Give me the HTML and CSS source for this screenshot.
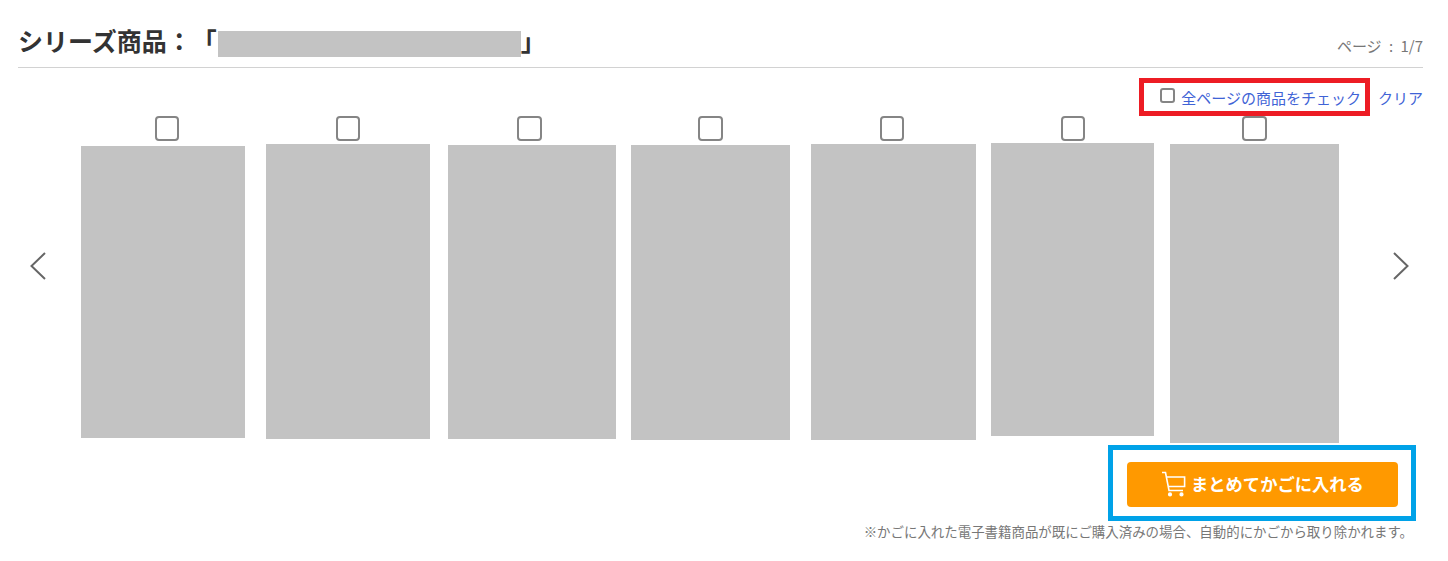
FILE: index.html
```html
<!DOCTYPE html>
<html lang="ja">
<head>
<meta charset="utf-8">
<title>シリーズ商品</title>
<link rel="stylesheet" href="styles.css">
</head>
<body>
<main class="page">
  <header class="head">
    <h2 class="title">シリーズ商品：「<span class="mask"></span>」</h2>
    <span class="pageno">ページ : 1/7</span>
  </header>
  <div class="tools">
    <label class="checkall"><input type="checkbox" class="small-check"><a href="#">全ページの商品をチェック</a></label>
    <a href="#" class="clear">クリア</a>
  </div>
  <span class="mark mark-red"></span>
  <section class="carousel">
    <button class="nav" aria-label="前へ">
      <svg width="18" height="30" viewBox="0 0 18 30"><path d="M16 2 L2.5 15 L16 28" fill="none" stroke="#666" stroke-width="2"/></svg>
    </button>
    <div class="items">
      <div class="item"><input type="checkbox" class="check"><div class="cover" style="width:164px;height:292px;margin-left:6px;margin-top:5px"></div></div>
      <div class="item"><input type="checkbox" class="check"><div class="cover" style="width:164px;height:295px;margin-left:9.7px;margin-top:3px"></div></div>
      <div class="item"><input type="checkbox" class="check"><div class="cover" style="width:168px;height:294px;margin-left:10.4px;margin-top:4px"></div></div>
      <div class="item"><input type="checkbox" class="check"><div class="cover" style="width:159px;height:295px;margin-left:12.1px;margin-top:4px"></div></div>
      <div class="item"><input type="checkbox" class="check"><div class="cover" style="width:165px;height:296px;margin-left:10.9px;margin-top:3px"></div></div>
      <div class="item"><input type="checkbox" class="check"><div class="cover" style="width:163px;height:293px;margin-left:9.6px;margin-top:2px"></div></div>
      <div class="item"><input type="checkbox" class="check"><div class="cover" style="width:169px;height:299px;margin-left:7.3px;margin-top:3px"></div></div>
    </div>
    <button class="nav" aria-label="次へ">
      <svg width="18" height="30" viewBox="0 0 18 30"><path d="M2 2 L15.5 15 L2 28" fill="none" stroke="#666" stroke-width="2"/></svg>
    </button>
  </section>
  <div class="actions">
    <button class="cart">
      <svg width="25" height="26" viewBox="0 0 25 26" fill="none" stroke="#fff" stroke-width="1.6"><path d="M1 1.5 H4.5 L8 19.5 H22"/><path d="M5.4 6 H23.6 V15.5 H7.2"/><circle cx="9" cy="23.4" r="1.3" fill="#fff"/><circle cx="20.5" cy="23.4" r="1.3" fill="#fff"/></svg>
      <span>まとめてかごに入れる</span>
    </button>
  </div>
  <span class="mark mark-blue"></span>
  <p class="note">※かごに入れた電子書籍商品が既にご購入済みの場合、自動的にかごから取り除かれます。</p>
</main>
</body>
</html>
```
FILE: styles.css
```css
* { box-sizing: border-box; }
html, body { margin: 0; padding: 0; background: #fff; }
body {
  font-family: "Noto Sans CJK JP", "Noto Sans", sans-serif;
  color: #333;
  height: 561px;
  overflow: hidden;
  text-spacing-trim: space-all;
}
a { color: #3f63d6; text-decoration: none; }
.page { position: relative; padding: 0 25px 0 18px; }
.head {
  height: 68px;
  padding-top: 31px;
  border-bottom: 1px solid #d2d2d2;
  display: flex;
  justify-content: space-between;
}
.title {
  margin: 0;
  height: 26px;
  font-size: 25px;
  line-height: 18px;
  font-weight: 700;
  color: #333;
  display: flex;
  align-items: flex-start;
  white-space: nowrap;
}
.mask { display: block; width: 303px; height: 26px; margin-left: 1px; background: #c3c3c3; }
.pageno { font-size: 15px; line-height: 20px; color: #777; margin-top: 5px; word-spacing: 4px; }
.tools {
  height: 48px;
  padding-top: 19px;
  display: flex;
  justify-content: flex-end;
  align-items: flex-start;
  font-size: 15px;
  line-height: 22px;
}
.checkall { display: flex; align-items: flex-start; }
.small-check {
  appearance: none;
  width: 15px; height: 15px;
  margin: 1px 6px 0 0;
  border: 2px solid #858585;
  border-radius: 3px;
  background: #fff;
}
.clear { margin-left: 17px; }
.mark { position: absolute; display: block; pointer-events: none; border-style: solid; }
.mark-red { left: 1139px; top: 78px; width: 231px; height: 38px; border-width: 5px; border-color: #ed1c24; }
.mark-blue { left: 1108px; top: 445px; width: 308px; height: 76px; border-width: 5px; border-color: #00a2e8; }
.carousel { display: flex; align-items: flex-start; height: 327px; }
.nav {
  flex: none;
  width: 57px;
  height: 327px;
  padding: 0 0 0 11px;
  border: 0;
  background: none;
  display: flex;
  align-items: flex-start;
}
.nav svg { margin-top: 135px; display: block; }
.nav:last-child { width: 96px; padding: 0 0 0 48px; }
.items { flex: none; width: 1269px; display: grid; grid-template-columns: repeat(7, 1fr); }
.item { display: flex; flex-direction: column; align-items: flex-start; min-width: 0; }
.check {
  appearance: none;
  width: 24.5px; height: 25px;
  margin: 0 0 0 79.5px;
  border: 2px solid #858585;
  border-radius: 4px;
  background: #fff;
  flex: none;
}
.cover { background: #c3c3c3; flex: none; }
.actions { display: flex; justify-content: flex-end; height: 78px; padding-top: 19px; }
.cart {
  width: 271px;
  height: 45px;
  margin-right: 25px;
  border: 0;
  border-radius: 4px;
  background: #ff9900;
  color: #fff;
  font-family: inherit;
  font-size: 17.3px;
  font-weight: 700;
  display: flex;
  align-items: center;
  padding: 0 0 2px 34px;
  gap: 5px;
}
.note {
  margin: 0;
  text-align: right;
  font-size: 13.45px;
  line-height: 20px;
  color: #777;
  padding-right: 10px;
}
```
